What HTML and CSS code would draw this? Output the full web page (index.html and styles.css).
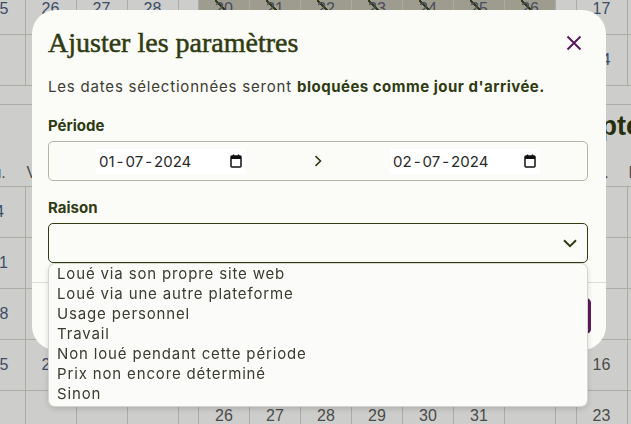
FILE: index.html
```html
<!DOCTYPE html>
<html lang="fr">
  <head>
    <meta charset="utf-8">
    <title>Calendrier</title>
    <link rel="stylesheet" href="styles.css">
  </head>
  <body>
    <div class="calendar">
      <div class="cal-row cal-top">
        <div class="month">
          <div class="grid">
            <div class="day">22</div><div class="day">23</div><div class="day">24</div><div class="day">25</div><div class="day">26</div><div class="day">27</div><div class="day">28</div>
            <div class="day">29</div><div class="day">30</div><div class="day"></div><div class="day"></div><div class="day"></div><div class="day"></div><div class="day"></div>
          </div>
        </div>
        <div class="month">
          <div class="grid">
            <div class="day blocked"><span>20</span></div><div class="day blocked"><span>21</span></div><div class="day blocked"><span>22</span></div><div class="day blocked"><span>23</span></div><div class="day blocked"><span>24</span></div><div class="day blocked"><span>25</span></div><div class="day blocked"><span>26</span></div>
            <div class="day">27</div><div class="day">28</div><div class="day">29</div><div class="day">30</div><div class="day">31</div><div class="day"></div><div class="day"></div>
          </div>
        </div>
        <div class="month">
          <div class="grid">
            <div class="day">17</div><div class="day">18</div><div class="day">19</div><div class="day">20</div><div class="day">21</div><div class="day">22</div><div class="day">23</div>
            <div class="day">24</div><div class="day">25</div><div class="day">26</div><div class="day">27</div><div class="day">28</div><div class="day">29</div><div class="day">30</div>
          </div>
        </div>
      </div>

      <div class="cal-row cal-bottom">
        <div class="month">
          <h2 class="month-title">Juillet 2024</h2>
          <div class="weekdays"><span>Lun.</span><span>Mar.</span><span>Mer.</span><span>Jeu.</span><span>Ven.</span><span>Sam.</span><span>Dim.</span></div>
          <div class="grid">
            <div class="day">1</div><div class="day">2</div><div class="day">3</div><div class="day">4</div><div class="day">5</div><div class="day">6</div><div class="day">7</div>
            <div class="day">8</div><div class="day">9</div><div class="day">10</div><div class="day">11</div><div class="day">12</div><div class="day">13</div><div class="day">14</div>
            <div class="day">15</div><div class="day">16</div><div class="day">17</div><div class="day">18</div><div class="day">19</div><div class="day">20</div><div class="day">21</div>
            <div class="day">22</div><div class="day">23</div><div class="day">24</div><div class="day">25</div><div class="day">26</div><div class="day">27</div><div class="day">28</div>
            <div class="day">29</div><div class="day">30</div><div class="day">31</div><div class="day"></div><div class="day"></div><div class="day"></div><div class="day"></div>
          </div>
        </div>
        <div class="month">
          <h2 class="month-title">Août 2024</h2>
          <div class="weekdays"><span>Lun.</span><span>Mar.</span><span>Mer.</span><span>Jeu.</span><span>Ven.</span><span>Sam.</span><span>Dim.</span></div>
          <div class="grid grey">
            <div class="day"></div><div class="day"></div><div class="day"></div><div class="day">1</div><div class="day">2</div><div class="day">3</div><div class="day">4</div>
            <div class="day">5</div><div class="day">6</div><div class="day">7</div><div class="day">8</div><div class="day">9</div><div class="day">10</div><div class="day">11</div>
            <div class="day">12</div><div class="day">13</div><div class="day">14</div><div class="day">15</div><div class="day">16</div><div class="day">17</div><div class="day">18</div>
            <div class="day">19</div><div class="day">20</div><div class="day">21</div><div class="day">22</div><div class="day">23</div><div class="day">24</div><div class="day">25</div>
            <div class="day">26</div><div class="day">27</div><div class="day">28</div><div class="day">29</div><div class="day">30</div><div class="day">31</div><div class="day"></div>
          </div>
        </div>
        <div class="month">
          <h2 class="month-title">Septembre 2024</h2>
          <div class="weekdays"><span>Lun.</span><span>Mar.</span><span>Mer.</span><span>Jeu.</span><span>Ven.</span><span>Sam.</span><span>Dim.</span></div>
          <div class="grid grey">
            <div class="day"></div><div class="day"></div><div class="day"></div><div class="day"></div><div class="day"></div><div class="day"></div><div class="day">1</div>
            <div class="day">2</div><div class="day">3</div><div class="day">4</div><div class="day">5</div><div class="day">6</div><div class="day">7</div><div class="day">8</div>
            <div class="day">9</div><div class="day">10</div><div class="day">11</div><div class="day">12</div><div class="day">13</div><div class="day">14</div><div class="day">15</div>
            <div class="day">16</div><div class="day">17</div><div class="day">18</div><div class="day">19</div><div class="day">20</div><div class="day">21</div><div class="day">22</div>
            <div class="day">23</div><div class="day">24</div><div class="day">25</div><div class="day">26</div><div class="day">27</div><div class="day">28</div><div class="day">29</div>
          </div>
        </div>
      </div>
    </div>

    <div class="overlay">
      <div class="modal">
        <div class="modal-body">
          <div class="modal-head">
            <h1 class="modal-title">Ajuster les paramètres</h1>
            <button class="close" type="button" aria-label="Fermer">
              <svg width="16" height="16" viewBox="0 0 16 16"><path d="M1.5 1.5l13 13M14.5 1.5l-13 13" stroke="#5b1b5e" stroke-width="2" fill="none"/></svg>
            </button>
          </div>
          <p class="intro">Les dates sélectionnées seront <strong>bloquées comme jour d'arrivée.</strong></p>

          <div class="label">Période</div>
          <div class="range">
            <div class="date-field">
              <span class="date-text">01<i>-</i>07<i>-</i>2024</span>
              <svg width="12" height="14" viewBox="0 0 12 14"><rect x="1" y="2" width="10" height="11" rx="1" fill="none" stroke="#111" stroke-width="1.5"/><rect x="1" y="2" width="10" height="3" fill="#111"/><path d="M3.5 0.5v2M8.5 0.5v2" stroke="#111" stroke-width="1.3"/></svg>
            </div>
            <svg class="range-arrow" width="8" height="12" viewBox="0 0 8 12"><path d="M1.5 1.2l5 4.8-5 4.8" stroke="#2f3b12" stroke-width="1.6" fill="none"/></svg>
            <div class="date-field">
              <span class="date-text">02<i>-</i>07<i>-</i>2024</span>
              <svg width="12" height="14" viewBox="0 0 12 14"><rect x="1" y="2" width="10" height="11" rx="1" fill="none" stroke="#111" stroke-width="1.5"/><rect x="1" y="2" width="10" height="3" fill="#111"/><path d="M3.5 0.5v2M8.5 0.5v2" stroke="#111" stroke-width="1.3"/></svg>
            </div>
          </div>

          <div class="label label-reason">Raison</div>
          <div class="select-wrap">
            <div class="select">
              <svg width="14" height="9" viewBox="0 0 14 9"><path d="M1 1.2l6 6 6-6" stroke="#2f3b12" stroke-width="2" fill="none"/></svg>
            </div>
            <ul class="options">
              <li>Loué via son propre site web</li>
              <li>Loué via une autre plateforme</li>
              <li>Usage personnel</li>
              <li>Travail</li>
              <li>Non loué pendant cette période</li>
              <li>Prix non encore déterminé</li>
              <li>Sinon</li>
            </ul>
          </div>
        </div>
        <div class="modal-foot">
          <button class="btn-cancel" type="button">Annuler</button>
          <button class="btn-save" type="button">Enregistrer</button>
        </div>
      </div>
    </div>
  </body>
</html>
```

FILE: styles.css
```css
* {
  box-sizing: border-box;
}
body {
  margin: 0;
  overflow: hidden;
  background-color: #fdfdfb;
  font-family: "Liberation Sans", Arial, sans-serif;
}

/* calendrier en arriere-plan */
.calendar {
  margin: -16px 0 0 -179.5px;
  width: 1200px;
}
.cal-row {
  display: flex;
  gap: 20.5px;
}
.cal-top {
  padding-bottom: 18px;
  border-bottom: 1px solid #d4d4cd;
}
.month {
  flex: none;
  width: 357px;
}
.grid {
  display: grid;
  grid-template-columns: repeat(7, 51px);
  border-left: 1px solid #d4d4cd;
}
.cal-bottom .grid {
  border-top: 1px solid #d4d4cd;
}
.day {
  height: 51px;
  display: flex;
  align-items: center;
  justify-content: center;
  border-right: 1px solid #d4d4cd;
  border-bottom: 1px solid #d4d4cd;
  font-size: 16px;
  color: #4a607e;
}
.grid.grey .day {
  color: #5e5e5b;
}
.day.blocked {
  background-color: #c3bfb1;
}
.day.blocked span {
  color: #5a6070;
  background: linear-gradient(to top right, transparent 46%, #3a4a18 46%, #3a4a18 54%, transparent 54%);
}
.month-title {
  margin: 7px 0 0 -8px;
  height: 28px;
  line-height: 28px;
  font-size: 27px;
  font-weight: bold;
  color: #2f3b12;
}
.weekdays {
  display: grid;
  grid-template-columns: repeat(7, 51px);
  margin-top: 20px;
  height: 26px;
  line-height: 26px;
  padding-left: 2px;
  font-size: 16px;
  color: #5e5e5b;
}

/* fenetre modale */
.overlay {
  position: fixed;
  top: 0;
  left: 0;
  right: 0;
  bottom: 0;
  display: flex;
  align-items: flex-start;
  padding: 10px 0 0 32px;
  background-color: rgba(0, 0, 0, 0.19);
}
.modal {
  width: 574px;
  background-color: #fbfbf8;
  border-radius: 24px;
  font-family: Inter, "Open Sans", sans-serif;
}
.modal-body {
  padding: 18px 18px 0 16px;
}
.modal-head {
  display: flex;
  align-items: center;
  justify-content: space-between;
}
.modal-title {
  margin: 0;
  height: 30px;
  line-height: 30px;
  font-family: "Liberation Serif", "Times New Roman", serif;
  font-size: 28px;
  font-weight: normal;
  -webkit-text-stroke: 0.5px #2f3b12;
  color: #2f3b12;
}
.close {
  display: flex;
  align-items: center;
  justify-content: center;
  width: 24px;
  height: 24px;
  margin-right: 2px;
  padding: 0;
  border: 0;
  background: none;
}
.intro {
  margin: 19px 0 0;
  line-height: 20px;
  font-size: 15px;
  letter-spacing: 0.8px;
  color: #3d3d33;
}
.intro strong {
  letter-spacing: 0.5px;
  color: #2f3b12;
}
.label {
  margin-top: 19px;
  line-height: 20px;
  font-size: 15px;
  font-weight: bold;
  color: #2f3b12;
}
.label-reason {
  margin-top: 17px;
}
.range {
  display: flex;
  align-items: center;
  justify-content: center;
  gap: 68px;
  height: 40px;
  margin-top: 5px;
  border: 1px solid #b5b2a6;
  border-radius: 5px;
}
.date-field {
  display: flex;
  align-items: center;
  justify-content: space-between;
  width: 150px;
  height: 25px;
  padding: 0 4px 0 3px;
  background-color: #fff;
  font-size: 15px;
  color: #2a2a2a;
}
.date-text i {
  margin: 0 2px;
  font-style: normal;
}
.range-arrow {
  display: block;
}
.select-wrap {
  position: relative;
  margin-top: 5px;
}
.select {
  display: flex;
  align-items: center;
  justify-content: flex-end;
  height: 40px;
  padding-right: 10px;
  border: 1px solid #2f3b12;
  border-radius: 5px;
  background-color: #fbfbf8;
}
.options {
  position: absolute;
  top: 41px;
  left: 1px;
  right: 1px;
  z-index: 2;
  margin: 0;
  padding: 0 0 2px;
  list-style: none;
  background-color: #fbfbf9;
  border-radius: 6px;
  box-shadow: 0 0 0 1px #d6d6d0, 0 2px 6px rgba(0, 0, 0, 0.18);
}
.options li {
  height: 20px;
  line-height: 20px;
  padding-left: 8px;
  font-size: 15px;
  letter-spacing: 0.85px;
  color: #3b3b30;
}
.modal-foot {
  display: flex;
  justify-content: space-between;
  margin-top: 19px;
  padding: 15px 15px 16px 16px;
  border-top: 1px solid #dcdcd6;
}
.modal-foot button {
  height: 36px;
  padding: 0 18px;
  border-radius: 5px;
  font-size: 15px;
}
.btn-cancel {
  border: 1px solid #2f3b12;
  background: none;
  color: #2f3b12;
}
.btn-save {
  border: 0;
  background-color: #5b1b5e;
  color: #fff;
}
```
